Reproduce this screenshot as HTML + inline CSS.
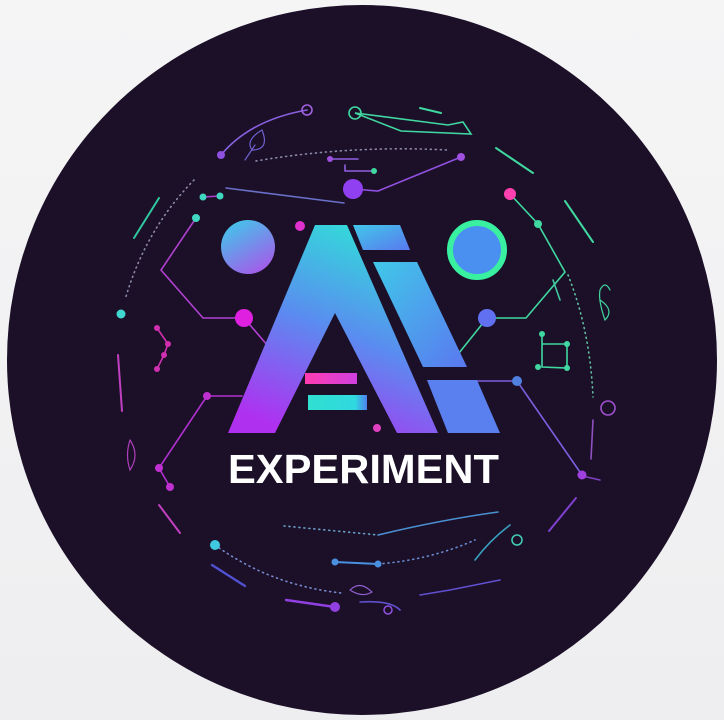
<!DOCTYPE html>
<html><head><meta charset="utf-8"><style>
html,body{margin:0;padding:0;width:724px;height:720px;overflow:hidden;background:#f3f3f4}
</style></head><body>
<svg width="724" height="720" viewBox="0 0 724 720" xmlns="http://www.w3.org/2000/svg">
<defs>
<linearGradient id="bg" x1="0" y1="0" x2="0" y2="1"><stop offset="0" stop-color="#f5f5f6"/><stop offset="1" stop-color="#eeeef0"/></linearGradient>
<linearGradient id="ag" x1="0.3" y1="1" x2="0.7" y2="0"><stop offset="0" stop-color="#b030f0"/><stop offset="0.5" stop-color="#5a8cf0"/><stop offset="1" stop-color="#30e0d8"/></linearGradient>
<linearGradient id="ig" x1="0" y1="0" x2="1" y2="1"><stop offset="0" stop-color="#40c8e8"/><stop offset="1" stop-color="#5a78f0"/></linearGradient>
<linearGradient id="cg" x1="0" y1="0" x2="0.6" y2="1"><stop offset="0" stop-color="#38d0ea"/><stop offset="1" stop-color="#a060ea"/></linearGradient>
<linearGradient id="pb" x1="0" y1="0" x2="1" y2="0"><stop offset="0" stop-color="#ff3cb0"/><stop offset="1" stop-color="#d040e0"/></linearGradient>
<linearGradient id="tb" x1="0" y1="0" x2="1" y2="0"><stop offset="0" stop-color="#30e0d0"/><stop offset="0.8" stop-color="#30d8e0"/><stop offset="1" stop-color="#5080f0"/></linearGradient>
</defs>
<rect width="724" height="720" fill="url(#bg)"/>
<circle cx="362" cy="360" r="355" fill="#1b1028"/>
<g fill="none" stroke-width="1.6" stroke-linecap="round">
<!-- dotted arcs -->
<path d="M256 161 Q350 145 448 150" stroke="#8a8aa8" stroke-dasharray="1 4"/>
<path d="M194 180 Q145 230 125 300" stroke="#8a8aa8" stroke-dasharray="1 4"/>
<path d="M568 275 Q590 330 593 397" stroke="#60c0a0" stroke-dasharray="1 4"/>
<path d="M284 526 L378 535" stroke="#6aa0c8" stroke-dasharray="1 4"/>
<path d="M378 535 Q440 520 498 512" stroke="#4a90d0"/>
<path d="M215 545 Q270 585 341 593" stroke="#7a8ad0" stroke-dasharray="1 4"/>
<path d="M378 564 Q430 560 475 540" stroke="#6a8ad0" stroke-dasharray="1 4"/>
<!-- top lines -->
<path d="M307 110 Q250 120 221 155" stroke="#8a60e0"/>
<path d="M262 130 Q270 150 252 150 Q245 140 262 130 M255 145 L245 160" stroke="#7060d0" stroke-width="1.2"/>
<path d="M355 113 L401 131 L471 134 L463 122 L448 125 Z" stroke="#40d8a0"/>
<path d="M461 157 L378 191 L353 189" stroke="#9050e0"/>
<path d="M330 159 L358 159 M345 171 L374 171 M345 165 L345 171" stroke="#9060e0"/>
<path d="M226 188 L344 203" stroke="#6a70c8"/>
<path d="M420 108 L441 113" stroke="#40d8a0" stroke-width="2"/>
<path d="M496 148 L533 173" stroke="#40d8a0" stroke-width="2"/>
<path d="M565 201 L593 242" stroke="#40d8a0" stroke-width="2"/>
<path d="M134 238 L159 198" stroke="#30c8a0" stroke-width="2"/>
<path d="M118 355 L122 411" stroke="#c040c0" stroke-width="2"/>
<path d="M159 505 L180 533" stroke="#c040c0" stroke-width="2"/>
<path d="M212 565 L245 586" stroke="#5050d0" stroke-width="2.4"/>
<path d="M286 600 L335 607" stroke="#9040e0" stroke-width="2.4"/>
<path d="M576 498 L549 531" stroke="#8040d0" stroke-width="2"/>
<path d="M593 420 L591 459" stroke="#9050c0"/>
<path d="M420 595 L450 590 L500 580 M360 602 Q390 600 400 610" stroke="#6050d0"/>
<path d="M350 590 Q360 580 372 592 Q362 598 350 590" stroke="#9060d0" stroke-width="1.2"/>
<path d="M600 480 L578 475" stroke="#8040c0"/>
<path d="M560 300 L553 280" stroke="#40c8a0"/>
<path d="M600 300 Q615 310 605 320 Q598 300 600 290 Q605 280 610 290" stroke="#40d8a0" stroke-width="1.2"/>
<path d="M130 440 Q140 455 130 470 Q125 455 130 440" stroke="#b040c0" stroke-width="1.2"/>
<path d="M475 560 Q490 540 510 525" stroke="#3aa0c0"/>
<!-- left circuit -->
<path d="M203 197 L220 196 M196 218 L161 270 L203 318 L244 318 L268 346" stroke="#b040d0"/>
<path d="M207 396 L242 396 M207 396 L159 468 L170 487" stroke="#b030d0"/>
<path d="M157 328 L168 344 L164 355 L157 369" stroke="#d030b0"/>
<!-- right circuit -->
<path d="M510 194 L538 224 L565 272 L526 318 L487 318 L459 353" stroke="#40d8a0"/>
<path d="M461 381 L517 381 L582 475" stroke="#7a60e0"/>
<path d="M542 334 L542 367 L567 368 L567 344 L542 344" stroke="#40d8a0"/>
<path d="M335 562 L378 564" stroke="#4a90e0" stroke-width="2"/>
</g>
<g>
<circle cx="307" cy="110" r="5" fill="none" stroke="#a060e0" stroke-width="1.6"/>
<circle cx="355" cy="113" r="6" fill="none" stroke="#40d8a0" stroke-width="1.6"/>
<circle cx="221" cy="155" r="4" fill="#9050e0"/>
<circle cx="461" cy="157" r="4" fill="#a050e0"/>
<circle cx="353" cy="189" r="10" fill="#9040f0"/>
<circle cx="330" cy="159" r="3" fill="#a050e0"/>
<circle cx="374" cy="171" r="3" fill="#40d8a0"/>
<circle cx="203" cy="197" r="3.5" fill="#40d8c0"/>
<circle cx="220" cy="196" r="3.5" fill="#40d8c0"/>
<circle cx="196" cy="218" r="4" fill="#40d8c0"/>
<circle cx="300" cy="226" r="5" fill="#e030d0"/>
<circle cx="244" cy="318" r="9" fill="#e020e0"/>
<circle cx="121" cy="314" r="4.5" fill="#40d8d0"/>
<circle cx="157" cy="328" r="3" fill="#d030b0"/>
<circle cx="168" cy="344" r="3" fill="#d030b0"/>
<circle cx="164" cy="355" r="3" fill="#d030b0"/>
<circle cx="157" cy="369" r="3" fill="#d030b0"/>
<circle cx="207" cy="396" r="4" fill="#c030d0"/>
<circle cx="159" cy="468" r="4" fill="#c030d0"/>
<circle cx="170" cy="487" r="4" fill="#c030d0"/>
<circle cx="510" cy="194" r="6" fill="#ff40b0"/>
<circle cx="538" cy="224" r="4" fill="#40d8a0"/>
<circle cx="487" cy="318" r="9" fill="#6070f0"/>
<circle cx="517" cy="381" r="5" fill="#5080e0"/>
<circle cx="582" cy="475" r="4.5" fill="#a040e0"/>
<circle cx="542" cy="334" r="3" fill="#40d8a0"/><circle cx="567" cy="344" r="3" fill="#40d8a0"/><circle cx="538" cy="367" r="3" fill="#40d8a0"/><circle cx="567" cy="368" r="3" fill="#40d8a0"/>
<circle cx="608" cy="408" r="7" fill="none" stroke="#a050d0" stroke-width="1.6"/>
<circle cx="517" cy="540" r="5" fill="none" stroke="#40c8b0" stroke-width="1.6"/>
<circle cx="215" cy="545" r="5" fill="#40c8e0"/>
<circle cx="335" cy="562" r="3.5" fill="#4a90e0"/>
<circle cx="378" cy="564" r="3.5" fill="#4a90e0"/>
<circle cx="335" cy="607" r="5" fill="#9040e0"/>
<circle cx="388" cy="610" r="4" fill="none" stroke="#9050e0" stroke-width="1.5"/>
<circle cx="377" cy="428" r="4" fill="#e040c0"/>
</g>
<!-- circles -->
<circle cx="248" cy="247" r="27" fill="url(#cg)"/>
<circle cx="477" cy="250" r="27" fill="#4a90f0" stroke="#38f0a0" stroke-width="6"/>
<!-- A -->
<path d="M315 225 L347 225 L438 433 L397 433 L335 313 L275 433 L228 433 Z" fill="url(#ag)"/>
<path d="M353 225 L400 225 L410 250 L363 250 Z" fill="url(#ig)"/>
<path d="M373 262 L417 262 L467 367 L423 367 Z" fill="url(#ig)"/>
<path d="M427 380 L477 380 L500 433 L448 433 Z" fill="#5a80f0"/>
<rect x="305" y="373" width="52" height="11" fill="url(#pb)"/>
<rect x="308" y="395" width="59" height="15" fill="url(#tb)"/>
<text x="228" y="483" font-family="Liberation Sans, sans-serif" font-weight="bold" font-size="41" fill="#fff" textLength="271" lengthAdjust="spacingAndGlyphs">EXPERIMENT</text>
</svg>
</body></html>
